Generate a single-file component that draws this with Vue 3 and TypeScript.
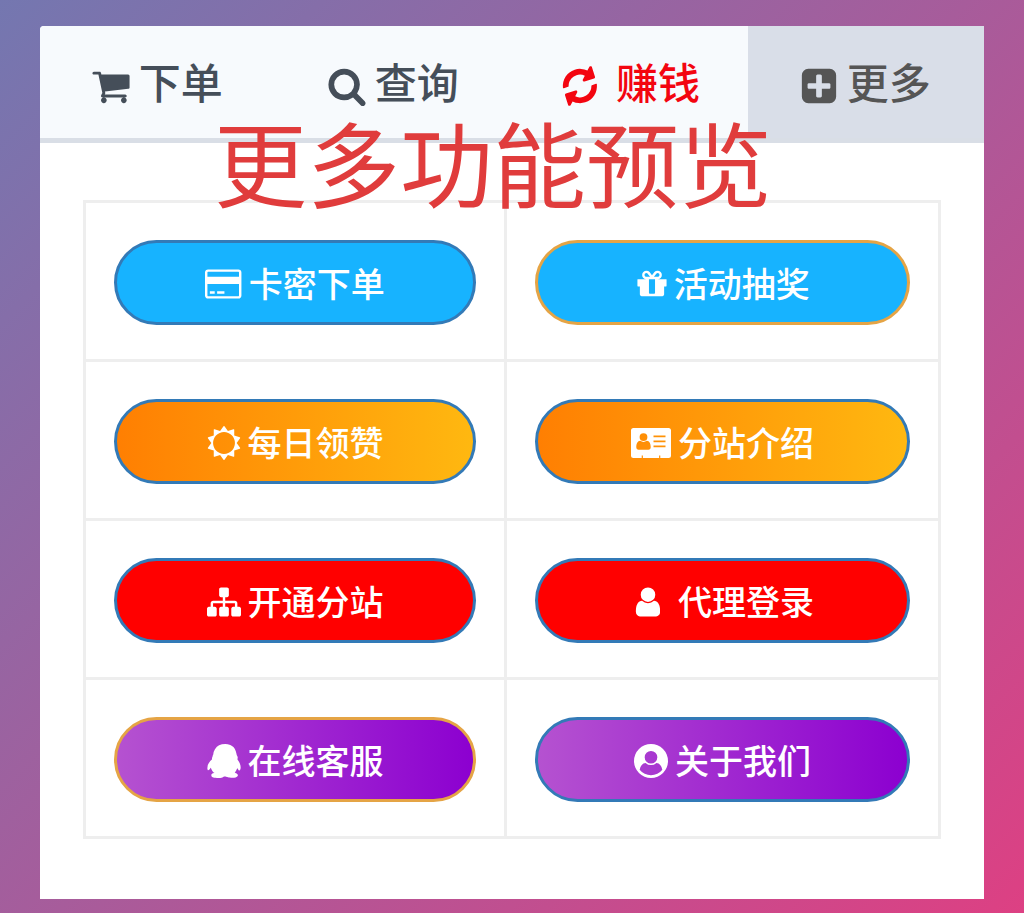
<script setup lang="ts">
interface Icon {
  width: number
  height: number
  path: string
}

interface Tab {
  label: string
  icon: string
  kind?: string
}

interface Action {
  label: string
  icon: string
  fill: string
  edge: string
  wide?: boolean
}

const icons: Record<string, Icon> = {
  cart: {
    width: 1728,
    height: 1792,
    path: 'M704 1536q0 52-38 90t-90 38-90-38-38-90 38-90 90-38 90 38 38 90zm896 0q0 52-38 90t-90 38-90-38-38-90 38-90 90-38 90 38 38 90zm128-1088v512q0 24-16.5 42.5t-40.5 21.5l-1044 122q13 60 13 70 0 16-24 64h920q26 0 45 19t19 45-19 45-45 19h-1024q-26 0-45-19t-19-45q0-11 8-31.5t16-36 21.5-40 15.5-29.5l-177-823h-204q-26 0-45-19t-19-45 19-45 45-19h256q16 0 28.5 6.5t19.5 15.5 13 24.5 8 26 5.5 29.5 4.5 26h1201q26 0 45 19t19 45z',
  },
  search: {
    width: 1728,
    height: 1792,
    path: 'M1216 832q0-185-131.5-316.5t-316.5-131.5-316.5 131.5-131.5 316.5 131.5 316.5 316.5 131.5 316.5-131.5 131.5-316.5zm512 832q0 52-38 90t-90 38q-54 0-90-38l-343-342q-179 124-399 124-143 0-273.5-55.5t-225-150-150-225-55.5-273.5 55.5-273.5 150-225 225-150 273.5-55.5 273.5 55.5 225 150 150 225 55.5 273.5q0 220-124 399l343 343q37 37 37 90z',
  },
  refresh: {
    width: 1792,
    height: 1792,
    path: 'M1639 1056q0 5-1 7-64 268-268 434.5t-478 166.5q-146 0-282.5-55t-243.5-157l-129 129q-19 19-45 19t-45-19-19-45v-448q0-26 19-45t45-19h448q26 0 45 19t19 45-19 45l-137 137q71 66 161 102t187 36q134 0 250-65t186-179q11-17 53-117 8-23 30-23h192q13 0 22.5 9.5t9.5 22.5zm25-800v448q0 26-19 45t-45 19h-448q-26 0-45-19t-19-45 19-45l138-138q-148-137-349-137-134 0-250 65t-186 179q-11 17-53 117-8 23-30 23h-199q-13 0-22.5-9.5t-9.5-22.5v-7q65-268 270-434.5t480-166.5q146 0 284 55.5t245 156.5l130-129q19-19 45-19t45 19 19 45z',
  },
  plus: {
    width: 1728,
    height: 1792,
    path: 'M1408 960v-128q0-26-19-45t-45-19h-320v-320q0-26-19-45t-45-19h-128q-26 0-45 19t-19 45v320h-320q-26 0-45 19t-19 45v128q0 26 19 45t45 19h320v320q0 26 19 45t45 19h128q26 0 45-19t19-45v-320h320q26 0 45-19t19-45zm256-544v960q0 119-84.5 203.5t-203.5 84.5h-960q-119 0-203.5-84.5t-84.5-203.5v-960q0-119 84.5-203.5t203.5-84.5h960q119 0 203.5 84.5t84.5 203.5z',
  },
  card: {
    width: 1920,
    height: 1792,
    path: 'M1760 128q66 0 113 47t47 113v1216q0 66-47 113t-113 47h-1600q-66 0-113-47t-47-113v-1216q0-66 47-113t113-47h1600zm-1600 128q-13 0-22.5 9.5t-9.5 22.5v224h1664v-224q0-13-9.5-22.5t-22.5-9.5h-1600zm1600 1280q13 0 22.5-9.5t9.5-22.5v-608h-1664v608q0 13 9.5 22.5t22.5 9.5h1600zm-1504-128v-128h256v128h-256zm384 0v-128h384v128h-384z',
  },
  gift: {
    width: 1664,
    height: 1792,
    path: 'M1056 1356v-716h-320v716q0 25 18 38.5t46 13.5h192q28 0 46-13.5t18-38.5zm-456-844h195l-126-161q-26-31-69-31-40 0-68 28t-28 68 28 68 68 28zm688-96q0-40-28-68t-68-28q-43 0-69 31l-125 161h194q40 0 68-28t28-68zm376 256v320q0 14-9 23t-23 9h-96v416q0 40-28 68t-68 28h-1088q-40 0-68-28t-28-68v-416h-96q-14 0-23-9t-9-23v-320q0-14 9-23t23-9h440q-93 0-158.5-65.5t-65.5-158.5 65.5-158.5 158.5-65.5q107 0 168 77l128 165 128-165q61-77 168-77 93 0 158.5 65.5t65.5 158.5-65.5 158.5-158.5 65.5h440q14 0 23 9t9 23z',
  },
  sun: {
    width: 1792,
    height: 1792,
    path: 'M1472 896q0-117-45.5-223.5t-123-184-184-123-223.5-45.5-223.5 45.5-184 123-123 184-45.5 223.5 45.5 223.5 123 184 184 123 223.5 45.5 223.5-45.5 184-123 123-184 45.5-223.5zm276 277q-4 15-20 20l-292 96v306q0 16-13 26-15 10-29 4l-292-94-180 248q-10 13-26 13t-26-13l-180-248-292 94q-14 6-29-4-13-10-13-26v-306l-292-96q-16-5-20-20-5-17 4-29l180-248-180-248q-9-13-4-29 4-15 20-20l292-96v-306q0-16 13-26 15-10 29-4l292 94 180-248q9-12 26-12t26 12l180 248 292-94q14-6 29 4 13 10 13 26v306l292 96q16 5 20 20 5 16-4 29l-180 248 180 248q9 12 4 29z',
  },
  badge: {
    width: 40,
    height: 34,
    path: 'M2.5 2h35A2.5 2.5 0 0 1 40 4.500v25a2.500 2.500 0 0 1-2.500 2.500H29.300v-2.600h-1.200V32H11.900v-2.600h-1.200V32H2.500A2.500 2.500 0 0 1 0 29.500v-25A2.500 2.500 0 0 1 2.500 2zM12.500 7.200a3.900 3.900 0 1 0 0 7.800 3.900 3.900 0 0 0 0-7.800zM9.300 14.800c-2.800.2-4 2.900-4 6.400 0 1.500.9 2.500 2.200 2.500h10c1.300 0 2.200-1 2.200-2.500 0-3.500-1.200-6.200-4-6.400-1.800 1.500-4.600 1.500-6.400 0zM22.500 9.500v1.700h12V9.500zM22.500 14.500v1.700h12v-1.700zM22.500 19.500v1.700h12v-1.700z',
  },
  sitemap: {
    width: 1792,
    height: 1792,
    path: 'M1792 1248v320q0 40-28 68t-68 28h-320q-40 0-68-28t-28-68v-320q0-40 28-68t68-28h96v-192h-512v192h96q40 0 68 28t28 68v320q0 40-28 68t-68 28h-320q-40 0-68-28t-28-68v-320q0-40 28-68t68-28h96v-192h-512v192h96q40 0 68 28t28 68v320q0 40-28 68t-68 28h-320q-40 0-68-28t-28-68v-320q0-40 28-68t68-28h96v-192q0-52 38-90t90-38h512v-192h-96q-40 0-68-28t-28-68v-320q0-40 28-68t68-28h320q40 0 68 28t28 68v320q0 40-28 68t-68 28h-96v192h512q52 0 90 38t38 90v192h96q40 0 68 28t28 68z',
  },
  user: {
    width: 1536,
    height: 1792,
    path: 'M1536 1399q0 109-62.500 187t-150.500 78h-854q-88 0-150.500-78t-62.500-187q0-85 8.500-160.500t31.500-152 58.500-131 94-89 134.500-34.500q131 128 313 128t313-128q76 0 134.500 34.500t94 89 58.500 131 31.500 152 8.500 160.500zm-256-887q0 159-112.500 271.500t-271.500 112.500-271.500-112.500-112.500-271.500 112.500-271.500 271.500-112.500 271.500 112.500 112.500 271.500z',
  },
  penguin: {
    width: 1792,
    height: 1792,
    path: 'M270 806q-8-19-8-52 0-20 11-49t24-45q-1-22 7.500-53t22.500-43q0-139 92.500-288.500t217.500-209.500q139-66 324-66 133 0 266 55 49 21 90 48t71 56 55 68 42 74 32.500 84.500 25.500 89.500 22 98l1 5q55 83 55 150 0 14-9 40t-9 38q0 1 1.500 3.500t3.500 5 2 3.500q77 114 120.500 214.500t43.500 208.500q0 43-19.500 100t-55.500 57q-9 0-19.500-7.500t-19-17.500-19-26-16-26-13.500-26-9-17q-1-1-3-1l-5 4q-59 154-132 223 20 20 61.500 38.500t69 41.500 35.500 65q-2 4-4 16t-7 18q-64 97-302 97-53 0-110.500-9t-98-20-104.500-30q-15-5-23-7-14-4-46-4.500t-40-1.500q-41 45-127.500 65t-168.500 20q-35 0-69-1.500t-93-9-101-20.500-74.500-40-32.500-64q0-40 10-59.500t41-48.500q11-2 40.500-13t49.500-12q4 0 14-2 2-2 2-4l-2-3q-48-11-108-105.500t-73-156.500l-5-3q-4 0-12 20-18 41-54.500 74.500t-77.500 37.500h-1q-4 0-6-4.500t-5-5.500q-23-54-23-100 0-275 252-466z',
  },
  profile: {
    width: 36,
    height: 36,
    path: 'M18 0a18 18 0 1 0 0 36 18 18 0 0 0 0-36zM18 7.300a6.700 6.700 0 1 1 0 13.400 6.700 6.700 0 0 1 0-13.400zM12.200 20q2.600 2.300 5.800 2.300t5.800-2.300c3.200.3 5.400 3 6.200 7.200a15.300 15.300 0 0 1-24 0c.8-4.200 3-6.900 6.200-7.200z',
  },
}

const tabs: Tab[] = [
  { label: '下单', icon: 'cart' },
  { label: '查询', icon: 'search' },
  { label: '赚钱', icon: 'refresh', kind: 'earn' },
  { label: '更多', icon: 'plus', kind: 'active' },
]

const actions: Action[] = [
  { label: '卡密下单', icon: 'card', fill: 'blue', edge: 'primary' },
  { label: '活动抽奖', icon: 'gift', fill: 'blue', edge: 'warning' },
  { label: '每日领赞', icon: 'sun', fill: 'orange', edge: 'primary' },
  { label: '分站介绍', icon: 'badge', fill: 'orange', edge: 'primary' },
  { label: '开通分站', icon: 'sitemap', fill: 'red', edge: 'primary' },
  { label: '代理登录', icon: 'user', fill: 'red', edge: 'primary', wide: true },
  { label: '在线客服', icon: 'penguin', fill: 'purple', edge: 'warning' },
  { label: '关于我们', icon: 'profile', fill: 'purple', edge: 'primary' },
]
</script>

<template>
  <div class="page">
    <main class="panel">
      <nav class="tabs">
        <a v-for="tab in tabs" :key="tab.label" href="#" class="tab" :class="tab.kind">
          <svg class="icon" :viewBox="`0 0 ${icons[tab.icon].width} ${icons[tab.icon].height}`" aria-hidden="true">
            <path :d="icons[tab.icon].path" fill-rule="evenodd" />
          </svg>
          <span>{{ tab.label }}</span>
        </a>
      </nav>
      <h1 class="title">更多功能预览</h1>
      <section class="content">
        <div class="grid">
          <div v-for="action in actions" :key="action.label" class="cell">
            <a href="#" class="pill" :class="[action.fill, action.edge, { wide: action.wide }]">
              <svg
                class="icon"
                :viewBox="`0 0 ${icons[action.icon].width} ${icons[action.icon].height}`"
                aria-hidden="true"
              >
                <path :d="icons[action.icon].path" fill-rule="evenodd" />
              </svg>
              <span>{{ action.label }}</span>
            </a>
          </div>
        </div>
      </section>
    </main>
  </div>
</template>

<style>
body {
  margin: 0;
}
</style>

<style scoped>
.page {
  box-sizing: border-box;
  min-height: 100vh;
  padding: 26px 40px 13px;
  background: linear-gradient(135deg, #7477b0 0%, #a75c9b 50%, #dd4083 100%);
  font-family: 'Noto Sans CJK SC', sans-serif;
  font-weight: 500;
}

.panel {
  position: relative;
  background: #fff;
  border-radius: 4px 0 0 0;
}

.tabs {
  display: grid;
  grid-template-columns: repeat(4, 1fr);
  background: #f7fafd;
  border-bottom: 5px solid #d9dee6;
  border-radius: 4px 0 0 0;
}

.tab {
  display: flex;
  align-items: center;
  justify-content: center;
  gap: 9px;
  padding: 30px 2px 32px 0;
  color: #454e59;
  font-size: 42px;
  line-height: 44px;
  text-decoration: none;
}

.tab .icon {
  height: 40px;
  margin-top: 10px;
}

.tab.earn {
  gap: 16px;
  padding-right: 0;
  color: #f30510;
}

.tab.earn .icon {
  transform: rotate(-18deg);
}

.tab.active {
  background: #d9dee8;
  color: #555;
}

.icon {
  display: block;
  fill: currentColor;
}

.title {
  position: absolute;
  top: 88px;
  left: 0;
  right: 0;
  margin: 0 38px 0 0;
  color: #e03c3c;
  font-size: 93px;
  font-weight: 400;
  line-height: 94px;
  text-align: center;
  pointer-events: none;
}

.content {
  padding: 57px 43px 60px;
}

.grid {
  display: grid;
  grid-template-columns: 421fr 434fr;
  border-top: 3px solid #eee;
  border-left: 3px solid #eee;
}

.cell {
  padding: 37px 28px 34px 28px;
  border-right: 3px solid #eee;
  border-bottom: 3px solid #eee;
}

.pill {
  display: flex;
  align-items: center;
  justify-content: center;
  gap: 7px;
  padding: 15px 0 14px;
  border: 3px solid #337ab7;
  border-radius: 43px;
  color: #fff;
  font-size: 34px;
  line-height: 50px;
  text-decoration: none;
}

.pill .icon {
  height: 34px;
  margin-top: 2px;
}

.pill.wide {
  gap: 18px;
}

.pill.warning {
  border-color: #e5a445;
}

.blue {
  background: #17b3ff;
}

.orange {
  background: linear-gradient(to right, #ff7f02, #ffb810);
}

.red {
  background: #f00;
}

.purple {
  background: linear-gradient(to right, #b552d0, #8c00d0);
}
</style>
